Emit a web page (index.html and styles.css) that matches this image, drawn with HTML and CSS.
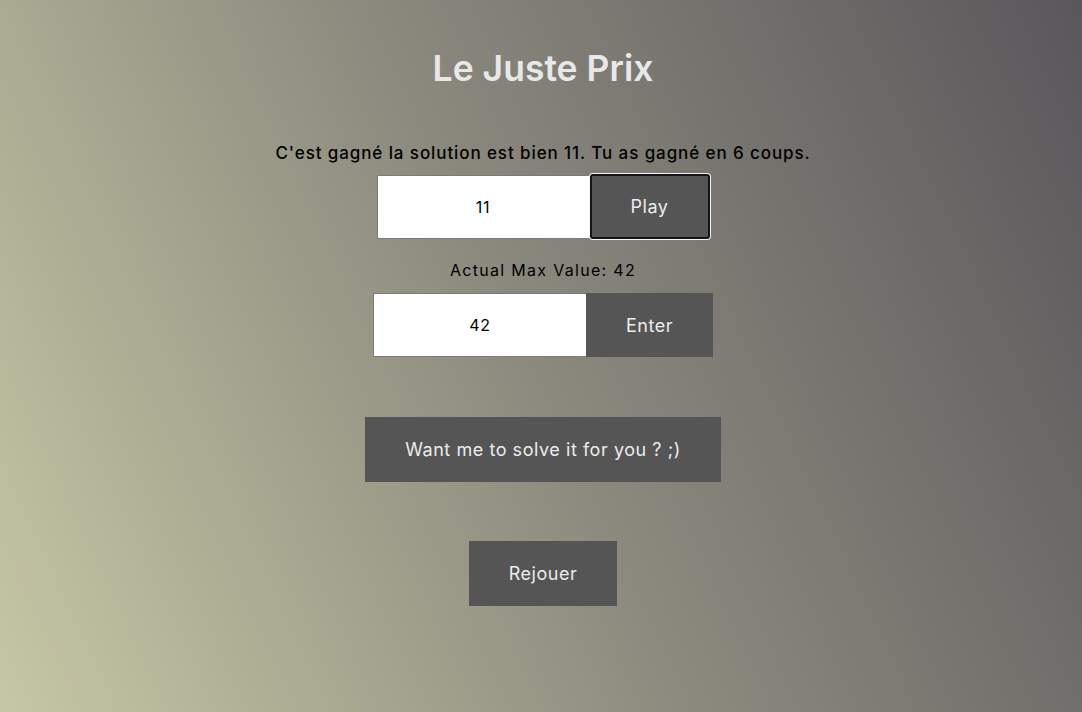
FILE: index.html
```html
<!DOCTYPE html>
<html lang="fr">
<head>
<meta charset="utf-8">
<title>Le Juste Prix</title>
<link rel="stylesheet" href="styles.css">
</head>
<body>
<main class="app">
  <h1 class="title">Le Juste Prix</h1>
  <p class="message">C'est gagné la solution est bien 11. Tu as gagné en 6 coups.</p>
  <div class="row row-play">
    <input class="field field-play" type="text" value="11">
    <button class="btn btn-play">Play</button>
  </div>
  <p class="label">Actual Max Value: 42</p>
  <div class="row row-max">
    <input class="field field-max" type="text" value="42">
    <button class="btn btn-enter">Enter</button>
  </div>
  <button class="btn btn-solve">Want me to solve it for you ? ;)</button>
  <button class="btn btn-replay">Rejouer</button>
</main>
</body>
</html>
```
FILE: styles.css
```css
html, body {
  margin: 0;
  height: 100%;
}
body {
  background: linear-gradient(65deg, #c6c7a5 0%, #8d8b7f 48%, #5a565b 100%);
  font-family: "Inter", "Noto Sans", sans-serif;
  color: #000;
}
.app {
  display: flex;
  flex-direction: column;
  align-items: center;
  padding-top: 42px;
  padding-left: 4px;
}
.title {
  margin: 0;
  font-size: 35.5px;
  line-height: 54px;
  font-weight: 600;
  color: #e8e8e8;
}
.message {
  margin: 45px 0 0;
  font-size: 17px;
  line-height: 24px;
  font-weight: 500;
  letter-spacing: 0.9px;
}
.row {
  display: flex;
  align-items: center;
}
.row-play {
  margin-top: 9px;
  height: 65px;
}
.row-max {
  margin-top: 11px;
  height: 64px;
}
.label {
  margin: 19px 0 0;
  font-size: 16px;
  line-height: 24px;
  font-weight: 400;
  letter-spacing: 1.3px;
}
.field {
  box-sizing: border-box;
  border: 1px solid #7a7a7a;
  border-right: none;
  background: #fff;
  text-align: center;
  font-family: inherit;
  font-size: 16px;
  letter-spacing: 0.8px;
  color: #000;
  outline: none;
  padding: 0;
}
.field-play {
  width: 212px;
  height: 64px;
  margin-right: 1px;
}
.field-max {
  width: 213px;
  height: 64px;
}
.btn {
  box-sizing: border-box;
  border: none;
  background: #555555;
  color: #ececec;
  font-family: inherit;
  font-size: 18px;
  font-weight: 400;
  letter-spacing: 0.55px;
  padding: 0;
}
.btn-play {
  width: 120px;
  height: 65px;
  border: 2px solid #141414;
  border-radius: 3px;
  box-shadow: 0 0 0 1px #f4f4f4;
}
.btn-enter {
  width: 127px;
  height: 64px;
}
.btn-solve {
  margin-top: 60px;
  width: 356px;
  height: 65px;
}
.btn-replay {
  margin-top: 59px;
  width: 148px;
  height: 65px;
}
```
